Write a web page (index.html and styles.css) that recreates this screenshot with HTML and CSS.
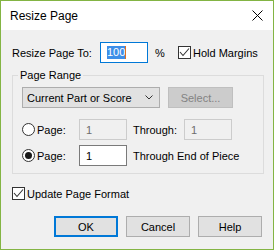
FILE: index.html
```html
<!DOCTYPE html>
<html lang="en">
<head>
<meta charset="UTF-8">
<title>Resize Page</title>
<link rel="stylesheet" href="styles.css">
</head>
<body>
  <div class="window">
    <div class="titlebar">
      <span class="title">Resize Page</span>
      <svg class="close" width="11" height="11" viewBox="0 0 11 11">
        <path d="M0.5 0.5 L10.5 10.5 M10.5 0.5 L0.5 10.5" stroke="#000" stroke-width="1" fill="none"/>
      </svg>
    </div>
    <div class="content">
      <div class="row top-row">
        <span class="resize-label">Resize Page To:</span>
        <div class="field focused"><span class="sel">100</span><span class="caret"></span></div>
        <span class="pct">%</span>
        <span class="check">
          <svg width="11" height="11" viewBox="0 0 11 11"><path d="M1 5 L4 8.5 L10 1.5" stroke="#333" stroke-width="1.1" fill="none"/></svg>
        </span>
        <span class="check-label">Hold Margins</span>
      </div>

      <fieldset class="group">
        <legend>Page Range</legend>
        <div class="row">
          <div class="combo">
            <span>Current Part or Score</span>
            <svg width="8" height="5" viewBox="0 0 8 5"><path d="M0.5 0.5 L4 4 L7.5 0.5" stroke="#333" stroke-width="1" fill="none"/></svg>
          </div>
          <div class="btn disabled select-btn">Select...</div>
        </div>
        <div class="row range-row">
          <span class="radio"></span>
          <span class="radio-label">Page:</span>
          <div class="field disabled">1</div>
          <span class="through">Through:</span>
          <div class="field disabled">1</div>
        </div>
        <div class="row range-row second">
          <span class="radio on"></span>
          <span class="radio-label">Page:</span>
          <div class="field">1</div>
          <span class="through">Through End of Piece</span>
        </div>
      </fieldset>

      <div class="row update-row">
        <span class="check">
          <svg width="11" height="11" viewBox="0 0 11 11"><path d="M1 5 L4 8.5 L10 1.5" stroke="#333" stroke-width="1.1" fill="none"/></svg>
        </span>
        <span class="check-label">Update Page Format</span>
      </div>

      <div class="buttons">
        <div class="btn default">OK</div>
        <div class="btn">Cancel</div>
        <div class="btn">Help</div>
      </div>
    </div>
  </div>
</body>
</html>
```

FILE: styles.css
```css
body {
  margin: 0;
  padding: 0;
  font-family: "Liberation Sans", Arial, sans-serif;
  font-size: 11px;
  color: #000;
}

.window {
  width: 274px;
  height: 250px;
  box-sizing: border-box;
  border: 1px solid #83b443;
  background-color: #f0f0f0;
}

.titlebar {
  height: 29px;
  background-color: #fff;
  display: flex;
  align-items: center;
  justify-content: space-between;
  padding: 0 10px 0 9px;
}

.title {
  font-size: 12px;
}

.close {
  display: block;
}

.content {
  padding: 0 9px 0 11px;
}

.row {
  display: flex;
  align-items: center;
}

.top-row {
  margin-top: 12px;
  height: 21px;
}

.resize-label {
  width: 88px;
}

.field {
  width: 48px;
  height: 21px;
  box-sizing: border-box;
  border: 1px solid #7a7a7a;
  background-color: #fff;
  padding-left: 6px;
  display: flex;
  align-items: center;
}

.field.focused {
  border-color: #0078d7;
}

.field.disabled {
  border-color: #cccccc;
  background-color: #f0f0f0;
  color: #6d6d6d;
}

.sel {
  background-color: #3d8ee8;
  color: #fff;
  line-height: 13px;
}

.caret {
  width: 1px;
  height: 13px;
  background-color: #e07020;
}

.pct {
  margin-left: 7px;
  width: 23px;
}

.check {
  width: 13px;
  height: 13px;
  box-sizing: border-box;
  border: 1px solid #333;
  background-color: #fff;
  display: flex;
  align-items: center;
  justify-content: center;
}

.check svg {
  display: block;
}

.check-label {
  margin-left: 2px;
}

.group {
  margin: 5px 0 0 0;
  padding: 5px 9px 7px 9px;
  border: 1px solid #dcdcdc;
  min-width: 0;
}

.group legend {
  margin-left: -4px;
  padding: 0 2px;
  line-height: 14px;
}

.combo {
  width: 138px;
  height: 21px;
  box-sizing: border-box;
  border: 1px solid #adadad;
  background-color: #e1e1e1;
  display: flex;
  align-items: center;
  justify-content: space-between;
  padding: 0 6px 0 4px;
}

.combo svg {
  display: block;
}

.btn {
  width: 64px;
  height: 21px;
  box-sizing: border-box;
  border: 1px solid #adadad;
  background-color: #e1e1e1;
  display: flex;
  align-items: center;
  justify-content: center;
}

.btn.disabled {
  border-color: #bfbfbf;
  background-color: #cccccc;
  color: #838383;
}

.select-btn {
  margin-left: 8px;
  width: 65px;
}

.btn.default {
  border: 2px solid #0078d7;
}

.range-row {
  margin-top: 11px;
  height: 21px;
}

.range-row.second {
  margin-top: 5px;
}

.radio {
  width: 13px;
  height: 13px;
  box-sizing: border-box;
  border: 1px solid #333;
  border-radius: 50%;
  background-color: #fff;
  display: flex;
  align-items: center;
  justify-content: center;
}

.radio.on::after {
  content: "";
  width: 7px;
  height: 7px;
  border-radius: 50%;
  background-color: #1a1a1a;
}

.radio-label {
  margin-left: 2px;
  width: 42px;
}

.through {
  margin-left: 6px;
  width: 51px;
  white-space: nowrap;
}

.update-row {
  margin-top: 13px;
  height: 13px;
}

.buttons {
  display: flex;
  justify-content: flex-end;
  gap: 8px;
  margin-top: 16px;
  margin-right: 2px;
}
```
